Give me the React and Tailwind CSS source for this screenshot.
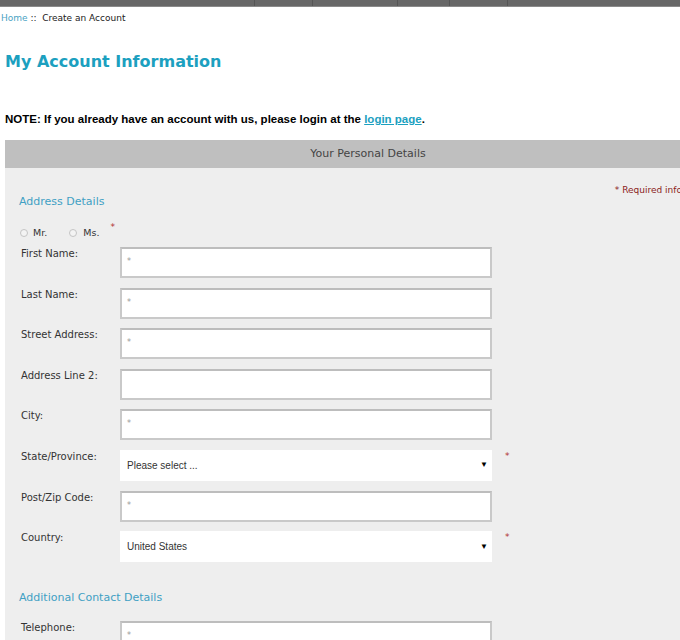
export default function App() {
  const rows = [
    { label: "First Name:", type: "input", req: true },
    { label: "Last Name:", type: "input", req: true },
    { label: "Street Address:", type: "input", req: true },
    { label: "Address Line 2:", type: "input", req: false },
    { label: "City:", type: "input", req: true },
    { label: "State/Province:", type: "select", value: "Please select ..." },
    { label: "Post/Zip Code:", type: "input", req: true },
    { label: "Country:", type: "select", value: "United States" },
  ];

  const Field = ({ row }) => (
    <div className="flex h-[31px]">
      <div className="w-[101px] shrink-0 text-[10px] leading-[14px] text-[#333] pl-[2px]">{row.label}</div>
      {row.type === "input" ? (
        <div className="w-[372px] h-[31px] bg-white border-2 border-[#c9c9c9] border-t-[#bdbdbd] pl-[5px] pt-[8px] text-[8px] leading-[10px] text-[#999]">
          {row.req ? "*" : ""}
        </div>
      ) : (
        <>
          <div className="w-[372px] h-[31px] bg-white flex items-center justify-between pl-[7px] pr-[4px] text-[10px] text-[#333] font-['Liberation_Sans',sans-serif]">
            <span>{row.value}</span>
            <span className="text-[8px] text-black">▼</span>
          </div>
          <span className="ml-[13px] mt-[1px] text-[9px] leading-[10px] text-[#b03030]">*</span>
        </>
      )}
    </div>
  );

  return (
    <div className="w-[680px] h-[640px] overflow-hidden bg-white font-['DejaVu_Sans',sans-serif]">
      <div className="h-[7px] bg-[#676767] flex border-b border-[#8a8a8a]">
        <div className="w-[255px] border-r border-[#555]" />
        <div className="w-[58px] border-r border-[#555]" />
        <div className="w-[85px] border-r border-[#555]" />
        <div className="w-[52px] border-r border-[#555]" />
        <div className="w-[58px] border-r border-[#555]" />
        <div className="flex-1" />
      </div>

      <div className="mt-[4px] pl-[1px] text-[9px] leading-[14px] text-[#222]">
        <span className="text-[#4aa3c4]">Home</span> ::&nbsp; Create an Account
      </div>

      <h1 className="mt-[26px] pl-[5px] text-[16px] leading-[22px] font-bold text-[#1ca0bf]">
        My Account Information
      </h1>

      <p className="mt-[39px] pl-[5px] text-[11.5px] leading-[14px] font-bold text-black font-['Liberation_Sans',sans-serif]">
        NOTE: If you already have an account with us, please login at the{" "}
        <span className="text-[#1ca0bf] underline">login page</span>.
      </p>

      <div className="mt-[14px] ml-[5px] w-[726px]">
        <div className="h-[28px] pt-[1px] bg-[#bfbfbf] flex items-center justify-center text-[11px] text-[#444]">
          Your Personal Details
        </div>
        <div className="bg-[#eeeeee] pb-[40px]">
          <div className="flex justify-between pt-[15px]">
            <div className="pl-[14px] pt-[11px] text-[11px] leading-[16px] text-[#3fa0c4]">Address Details</div>
            <div className="pr-[14px] text-[9px] leading-[14px] text-[#8b1c1c]">* Required information</div>
          </div>

          <div className="mt-[16px] pl-[15px] flex items-center h-[14px] text-[9.5px] text-[#333]">
            <span className="w-[8px] h-[8px] rounded-full border border-[#c4c4c4] bg-[#f3f3f3]" />
            <span className="ml-[5px]">Mr.</span>
            <span className="ml-[22px] w-[8px] h-[8px] rounded-full border border-[#c4c4c4] bg-[#f3f3f3]" />
            <span className="ml-[6px]">Ms.</span>
            <span className="ml-[11px] -mt-[10px] text-[9px] text-[#b03030]">*</span>
          </div>

          <div className="mt-[7px] pl-[14px] flex flex-col gap-[9.6px]">
            {rows.map((r) => (
              <Field key={r.label} row={r} />
            ))}
          </div>

          <div className="mt-[28px] pl-[14px] text-[11px] leading-[16px] text-[#3fa0c4]">Additional Contact Details</div>

          <div className="mt-[15px] pl-[14px] flex flex-col gap-[9.6px]">
            <Field row={{ label: "Telephone:", type: "input", req: true }} />
          </div>
        </div>
      </div>
    </div>
  );
}
